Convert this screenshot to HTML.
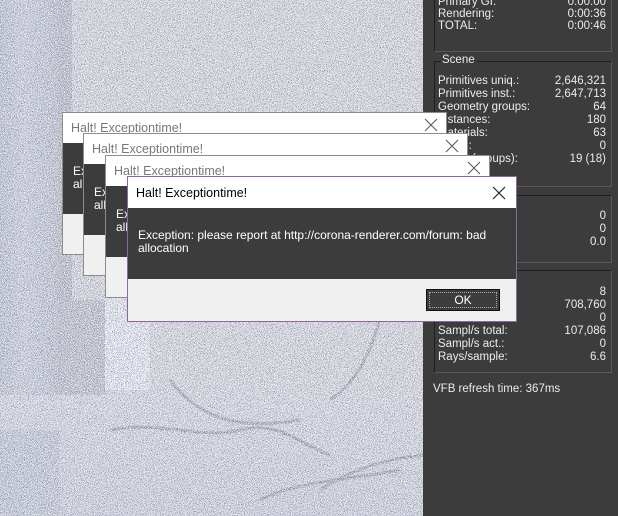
<!DOCTYPE html>
<html><head><meta charset="utf-8"><style>
*{margin:0;padding:0;box-sizing:border-box}
body{width:618px;height:516px;overflow:hidden;position:relative;font-family:"Liberation Sans",sans-serif;font-size:11.5px;background:#3c3c3c}
#img{position:absolute;left:0;top:0;width:423px;height:516px;background:#d2d2d4}
.l{position:absolute}
#noise{position:absolute;left:0;top:0;width:423px;height:516px}
.box{position:absolute;left:434px;width:178px;border:1px solid #1e1e1e;border-right-color:#5a5a5a;border-bottom-color:#5a5a5a}
.row{position:absolute;left:438px;width:168px;color:#ececec;line-height:13px;height:13px}
.row span{position:absolute;right:0}
.dlg{position:absolute;border:1px solid #8c8c8c;background:#f0f0f0}
.dlg .t{position:absolute;left:0;top:0;right:0;height:30px;background:#fff;color:#777;font-size:12.5px;padding:8px 0 0 8px}
.dlg .x{position:absolute;right:8px;top:5px;width:14px;height:14px}
.dlg .b{position:absolute;left:0;right:0;top:30px;background:#3c3c3c;color:#fff;font-size:12px}
</style></head><body>
<div id="img"></div>
<div class="l" style="left:0;top:0;width:60px;height:516px;background:linear-gradient(90deg,#aab0c0,#c0c4d2 40%,#a6acbd)"></div>
<div class="l" style="left:58px;top:0;width:14px;height:410px;background:#a2a4ac"></div>
<div class="l" style="left:62px;top:300px;width:45px;height:110px;background:#a8aab2"></div>
<div class="l" style="left:105px;top:295px;width:45px;height:95px;background:#eef0f4"></div>
<div class="l" style="left:0;top:395px;width:423px;height:121px;background:linear-gradient(180deg,#d2d4dc,#c2c6d2)"></div>
<div class="l" style="left:0;top:430px;width:60px;height:86px;background:#b2b8c6"></div>
<svg class="l" style="left:0;top:0" width="423" height="516"><g fill="none" stroke="#3a3e52" stroke-width="3" opacity=".55">
<path d="M110 430C160 420 200 440 240 430S300 445 330 455"/>
<path d="M170 380C200 420 240 430 300 420"/>
<path d="M380 320C370 350 360 380 330 400"/>
<path d="M260 500C300 480 350 480 400 470"/>
<path d="M320 490C350 470 380 460 423 455"/></g></svg>
<svg id="noise" width="423" height="516"><filter id="n"><feTurbulence type="fractalNoise" baseFrequency="1.3" numOctaves="1" seed="3"/><feColorMatrix values="0 0 0 0 0.2  0 0 0 0 0.22  0 0 0 0 0.33  6 0 0 0 -2.7"/></filter><filter id="w"><feTurbulence type="fractalNoise" baseFrequency="1.3" numOctaves="1" seed="9"/><feColorMatrix values="0 0 0 0 0.96  0 0 0 0 0.97  0 0 0 0 1  6 0 0 0 -2.5"/></filter><rect width="423" height="516" filter="url(#n)"/><rect width="423" height="516" filter="url(#w)" opacity=".85"/></svg>

<div class="box" style="top:-4px;height:56px"></div>
<div class="row" style="top:-4px">Primary GI:<span>0:00:00</span></div>
<div class="row" style="top:8px">Rendering:<span>0:00:36</span></div>
<div class="row" style="top:20px">TOTAL:<span>0:00:46</span></div>

<div class="box" style="top:61px;height:126px"></div>
<div class="row" style="top:54px;left:440px;width:auto;background:#3c3c3c;padding:0 2px">Scene</div>
<div class="row" style="top:75px">Primitives uniq.:<span>2,646,321</span></div>
<div class="row" style="top:88px">Primitives inst.:<span>2,647,713</span></div>
<div class="row" style="top:101px">Geometry groups:<span>64</span></div>
<div class="row" style="top:114px">Instances:<span>180</span></div>
<div class="row" style="top:127px">Materials:<span>63</span></div>
<div class="row" style="top:140px">Lights:<span>0</span></div>
<div class="row" style="top:153px">Lights (groups):<span>19 (18)</span></div>

<div class="box" style="top:195px;height:68px"></div>
<div class="row" style="top:210px"><span>0</span></div>
<div class="row" style="top:223px"><span>0</span></div>
<div class="row" style="top:236px"><span>0.0</span></div>

<div class="box" style="top:270px;height:103px"></div>
<div class="row" style="top:286px"><span>8</span></div>
<div class="row" style="top:299px"><span>708,760</span></div>
<div class="row" style="top:312px"><span>0</span></div>
<div class="row" style="top:325px">Sampl/s total:<span>107,086</span></div>
<div class="row" style="top:338px">Sampl/s act.:<span>0</span></div>
<div class="row" style="top:351px">Rays/sample:<span>6.6</span></div>
<div class="row" style="top:383px;left:433px">VFB refresh time: 367ms</div>

<div class="dlg" style="left:62px;top:112px;width:385px;height:143px"><div class="t">Halt! Exceptiontime!</div><svg class="x" viewBox="0 0 14 14"><path d="M1 1L13 13M13 1L1 13" stroke="#555" stroke-width="1"/></svg><div class="b" style="height:71px;padding:22px 0 0 10px;line-height:13px">Exception: please report at http://corona-renderer.com/forum: bad<br>allocation</div></div>
<div class="dlg" style="left:83px;top:133px;width:385px;height:143px"><div class="t">Halt! Exceptiontime!</div><svg class="x" viewBox="0 0 14 14"><path d="M1 1L13 13M13 1L1 13" stroke="#555" stroke-width="1"/></svg><div class="b" style="height:71px;padding:22px 0 0 10px;line-height:13px">Exception: please report at http://corona-renderer.com/forum: bad<br>allocation</div></div>
<div class="dlg" style="left:105px;top:155px;width:385px;height:143px"><div class="t">Halt! Exceptiontime!</div><svg class="x" viewBox="0 0 14 14"><path d="M1 1L13 13M13 1L1 13" stroke="#555" stroke-width="1"/></svg><div class="b" style="height:71px;padding:22px 0 0 10px;line-height:13px">Exception: please report at http://corona-renderer.com/forum: bad<br>allocation</div></div>
<div class="dlg" style="left:127px;top:176px;width:390px;height:146px;border-color:#8a6a9a"><div class="t" style="color:#000;height:31px;padding-top:9px">Halt! Exceptiontime!</div><svg class="x" style="top:9px;right:10px" viewBox="0 0 14 14"><path d="M1 1L13 13M13 1L1 13" stroke="#222" stroke-width="1.2"/></svg><div class="b" style="top:31px;height:71px;padding:21px 0 0 10px;line-height:13px">Exception: please report at http://corona-renderer.com/forum: bad<br>allocation</div>
<div style="position:absolute;left:298px;top:112px;width:74px;height:22px;background:#3c3c3c;border:1px solid #111;color:#fff;text-align:center;line-height:20px;font-size:12px"><div style="position:absolute;inset:2px;border:1px dotted #aaa"></div>OK</div></div>
</body></html>
